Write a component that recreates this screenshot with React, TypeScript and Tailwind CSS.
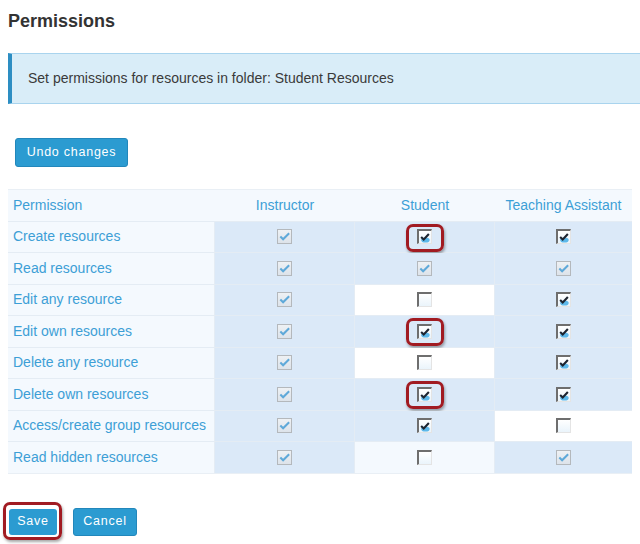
import React from "react";

type Cell = "dis" | "on" | "off";

type Row = {
  name: string;
  cells: { state: Cell; bg: string; mark?: boolean }[];
};

const BLUE = "bg-[#dbe9f8]";
const WHITE = "bg-white";
const PALE = "bg-[#f4f9fe]";

const rows: Row[] = [
  {
    name: "Create resources",
    cells: [
      { state: "dis", bg: BLUE },
      { state: "on", bg: BLUE, mark: true },
      { state: "on", bg: BLUE },
    ],
  },
  {
    name: "Read resources",
    cells: [
      { state: "dis", bg: BLUE },
      { state: "dis", bg: BLUE },
      { state: "dis", bg: BLUE },
    ],
  },
  {
    name: "Edit any resource",
    cells: [
      { state: "dis", bg: BLUE },
      { state: "off", bg: WHITE },
      { state: "on", bg: BLUE },
    ],
  },
  {
    name: "Edit own resources",
    cells: [
      { state: "dis", bg: BLUE },
      { state: "on", bg: BLUE, mark: true },
      { state: "on", bg: BLUE },
    ],
  },
  {
    name: "Delete any resource",
    cells: [
      { state: "dis", bg: BLUE },
      { state: "off", bg: WHITE },
      { state: "on", bg: BLUE },
    ],
  },
  {
    name: "Delete own resources",
    cells: [
      { state: "dis", bg: BLUE },
      { state: "on", bg: BLUE, mark: true },
      { state: "on", bg: BLUE },
    ],
  },
  {
    name: "Access/create group resources",
    cells: [
      { state: "dis", bg: BLUE },
      { state: "on", bg: BLUE },
      { state: "off", bg: WHITE },
    ],
  },
  {
    name: "Read hidden resources",
    cells: [
      { state: "dis", bg: BLUE },
      { state: "off", bg: PALE },
      { state: "dis", bg: BLUE },
    ],
  },
];

const Box = ({ state }: { state: Cell }) => {
  if (state === "dis") {
    return (
      <span className="relative block w-[15px] h-[15px] border border-[#b4b8bc] bg-gradient-to-b from-[#eef1f4] to-[#dde3ea]">
        <svg viewBox="0 0 14 14" className="absolute left-0 top-0 w-[13px] h-[13px]">
          <path d="M2.5 7 L5.5 10 L12 3.5" fill="none" stroke="#5fa9d9" strokeWidth="2.2" />
        </svg>
      </span>
    );
  }
  return (
    <span className="relative block w-[15px] h-[15px] border-t-2 border-l-2 border-[#6e6e6e] border-r border-b border-r-[#e4e4e4] border-b-[#e4e4e4] bg-gradient-to-b from-white to-[#eaf4fb]">
      {state === "on" && (
        <svg viewBox="0 0 14 14" className="absolute left-0 top-0 w-[12px] h-[12px]">
          <ellipse cx="7.5" cy="10.5" rx="5" ry="3" fill="#5db8ea" />
          <path d="M2.5 7 L5.5 10 L11.5 3.5" fill="none" stroke="#1d2430" strokeWidth="2.4" />
        </svg>
      )}
    </span>
  );
};

export default function App() {
  return (
    <div className="w-[640px] h-[544px] overflow-hidden bg-white pl-2 font-['Liberation_Sans',Arial,sans-serif]">
      <h1 className="pt-[10px] text-[18px] leading-[23px] font-bold text-[#333]">Permissions</h1>

      <div className="mt-[20px] h-[51px] flex items-center bg-[#d9edf8] border-l-4 border-l-[#2d8ec3] border-y border-y-[#a9d4ee] pl-4 text-[14px] text-[#3a3a3a]">
        Set permissions for resources in folder: Student Resources
      </div>

      <button className="mt-[34px] ml-[7px] w-[113px] h-[29px] rounded-[3px] bg-[#2b9bd1] border border-[#2287bb] text-white text-[12.5px] font-normal tracking-[0.06em]">
        Undo changes
      </button>

      <div className="mt-[22px] w-[624px] text-[14px] text-[#3d9fd6]">
        <div className="grid grid-cols-[207px_140px_140px_137px] h-[31.5px] bg-[#f4f9fe] border-t border-[#e9eff5]">
          <div className="flex items-center pl-[5px]">Permission</div>
          <div className="flex items-center justify-center">Instructor</div>
          <div className="flex items-center justify-center">Student</div>
          <div className="flex items-center justify-center">Teaching Assistant</div>
        </div>
        {rows.map((row) => (
          <div
            key={row.name}
            className="grid grid-cols-[207px_140px_140px_137px] h-[31.5px] border-t border-[#e4ecf4]"
          >
            <div className="flex items-center pl-[5px] bg-[#f4f9fe] border-r border-[#e4ecf4]">{row.name}</div>
            {row.cells.map((c, i) => (
              <div
                key={i}
                className={`relative flex items-center justify-center ${c.bg} ${i < 2 ? "border-r border-[#e4ecf4]" : ""}`}
              >
                <Box state={c.state} />
                {c.mark && (
                  <span className="absolute left-[51px] top-[2px] w-[38px] h-[28px] rounded-[7px] border-[3px] border-[#a11b22] shadow-[1px_2px_3px_rgba(0,0,0,0.35)]" />
                )}
              </div>
            ))}
          </div>
        ))}
        <div className="h-px bg-[#e9eff5]" />
      </div>

      <div className="mt-[34px] flex items-center gap-[16px]">
        <div className="relative ml-px">
          <span className="absolute -left-[6px] -top-[6px] w-[59px] h-[38px] rounded-[7px] border-[3px] border-[#a11b22] shadow-[1px_2px_3px_rgba(0,0,0,0.35)]" />
          <button className="w-[48px] h-[26px] rounded-[3px] bg-[#2b9bd1] text-white text-[12.5px] font-normal tracking-[0.06em]">
            Save
          </button>
        </div>
        <button className="w-[64px] h-[28px] rounded-[3px] bg-[#2b9bd1] border border-[#2287bb] text-white text-[12.5px] font-normal tracking-[0.06em]">
          Cancel
        </button>
      </div>
    </div>
  );
}
